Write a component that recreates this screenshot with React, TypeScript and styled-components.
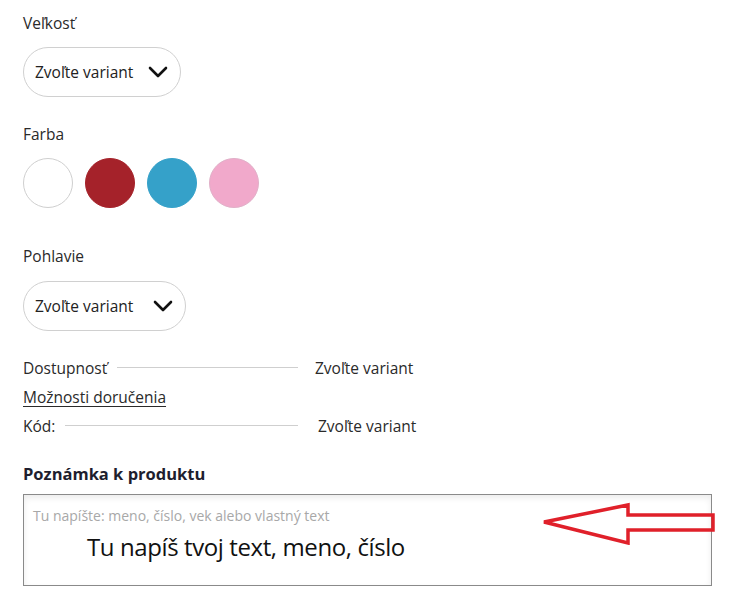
import React from 'react';
import styled, { createGlobalStyle } from 'styled-components';

const GlobalStyle = createGlobalStyle`
    body {
        margin: 0;
        background: #fff;
        font-family: 'Open Sans', 'Noto Sans', sans-serif;
        color: #222;
    }
`

const Page = styled.div`
    width: 732px;
    height: 594px;
    padding: 14px 0 0 23px;
    box-sizing: border-box;
    position: relative;
    overflow: hidden;
`

const Label = styled.div`
    font-size: 15.5px;
    line-height: 18px;
    color: #2a2a2a;
`

const Select = styled.div<{ $width: number }>`
    width: ${p => p.$width}px;
    height: 50px;
    box-sizing: border-box;
    border: 1px solid #d0d0d0;
    border-radius: 25px;
    display: flex;
    align-items: center;
    justify-content: space-between;
    padding: 0 12px 0 11px;
    margin: 15px 0 28px;
    font-size: 15.5px;
    color: #222;
`

const Swatches = styled.div`
    display: flex;
    gap: 12px;
    margin: 15px 0 39px;
`

const Swatch = styled.div<{ $color: string; $border: string }>`
    width: 50px;
    height: 50px;
    border-radius: 50%;
    box-sizing: border-box;
    background: ${p => p.$color};
    border: 1px solid ${p => p.$border};
`

const InfoRow = styled.div`
    display: flex;
    align-items: center;
    font-size: 15.5px;
    line-height: 18px;
    height: 29px;
`

const InfoLead = styled.div`
    width: 275px;
    display: flex;
    align-items: center;
`

const InfoLabel = styled.span`
    color: #2a2a2a;
`

const Line = styled.div`
    height: 1px;
    background: #cfcfcf;
    flex: 1;
    margin-left: 10px;
`

const InfoValue = styled.span<{ $offset: number }>`
    margin-left: ${p => p.$offset}px;
    color: #2a2a2a;
`

const Link = styled.a`
    font-size: 15.5px;
    line-height: 18px;
    height: 29px;
    display: flex;
    align-items: center;
    color: #2a2a2a;
    text-decoration: underline;
    text-underline-offset: 3px;
`

const NoteTitle = styled.div`
    font-size: 16.5px;
    font-weight: 700;
    color: #1e1e2e;
    margin-top: 25px;
    line-height: 18px;
`

const NoteBox = styled.div`
    width: 689px;
    height: 92px;
    box-sizing: border-box;
    margin-top: 11px;
    border: 1px solid #8a8a8a;
    box-shadow: inset 0 3px 6px rgba(0, 0, 0, 0.08);
    padding: 13px 9px;
    position: relative;
`

const Placeholder = styled.div`
    font-size: 14px;
    color: #a8a8a8;
    line-height: 16px;
`

const HandText = styled.div`
    font-family: 'Open Sans', 'Noto Sans', sans-serif;
    font-size: 24px;
    letter-spacing: -0.4px;
    color: #111;
    margin: 7px 0 0 54px;
    line-height: 32px;
`

const Arrow = styled.svg`
    position: absolute;
    left: 518px;
    top: 6px;
`

function Chevron() {
    return (
        <svg width="20" height="12" viewBox="0 0 20 12">
            <path d="M2 2 L10 10 L18 2" fill="none" stroke="#111" strokeWidth="2.6" strokeLinecap="round" strokeLinejoin="round" />
        </svg>
    );
}

export default function App() {
    return (
        <Page>
            <GlobalStyle />
            <Label>Veľkosť</Label>
            <Select $width={158}>
                <span>Zvoľte variant</span>
                <Chevron />
            </Select>
            <Label>Farba</Label>
            <Swatches>
                <Swatch $color="#ffffff" $border="#cfcfcf" />
                <Swatch $color="#a5222a" $border="#a5222a" />
                <Swatch $color="#35a1c9" $border="#35a1c9" />
                <Swatch $color="#f1a9cb" $border="#e0b0c8" />
            </Swatches>
            <Label>Pohlavie</Label>
            <Select $width={163} style={{ marginTop: 16 }}>
                <span>Zvoľte variant</span>
                <Chevron />
            </Select>
            <InfoRow style={{ marginTop: -6 }}>
                <InfoLead>
                    <InfoLabel>Dostupnosť</InfoLabel>
                    <Line />
                </InfoLead>
                <InfoValue $offset={17}>Zvoľte variant</InfoValue>
            </InfoRow>
            <Link>Možnosti doručenia</Link>
            <InfoRow>
                <InfoLead>
                    <InfoLabel>Kód:</InfoLabel>
                    <Line />
                </InfoLead>
                <InfoValue $offset={20}>Zvoľte variant</InfoValue>
            </InfoRow>
            <NoteTitle>Poznámka k produktu</NoteTitle>
            <NoteBox>
                <Placeholder>Tu napíšte: meno, číslo, vek alebo vlastný text</Placeholder>
                <HandText>Tu napíš tvoj text, meno, číslo</HandText>
                <Arrow width="175" height="44" viewBox="0 0 175 44">
                    <polygon points="2,21 86,4 86,14 171,14 171,29 86,29 86,42" fill="none" stroke="#e0202a" strokeWidth="3.5" strokeLinejoin="miter" />
                </Arrow>
            </NoteBox>
        </Page>
    );
}
